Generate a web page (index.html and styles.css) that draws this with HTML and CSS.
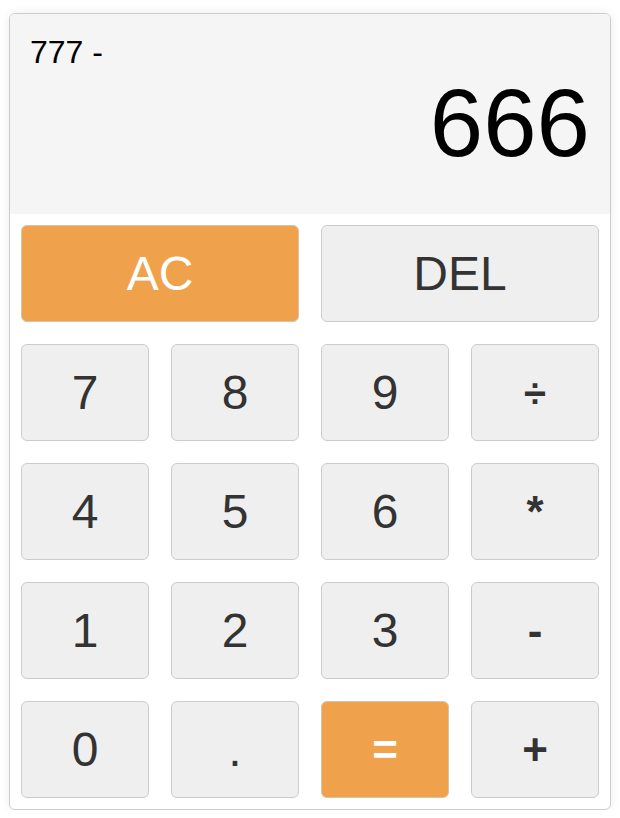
FILE: index.html
```html
<!DOCTYPE html>
<html>
<head>
<meta charset="utf-8">
<link rel="stylesheet" href="styles.css">
</head>
<body>
<div class="calc">
  <div class="display">
    <div class="prev">777 -</div>
    <div class="curr">666</div>
  </div>
  <div class="keys">
    <button class="key span2 accent">AC</button>
    <button class="key span2">DEL</button>
    <button class="key">7</button>
    <button class="key">8</button>
    <button class="key">9</button>
    <button class="key op div">÷</button>
    <button class="key">4</button>
    <button class="key">5</button>
    <button class="key">6</button>
    <button class="key op">*</button>
    <button class="key">1</button>
    <button class="key">2</button>
    <button class="key">3</button>
    <button class="key op">-</button>
    <button class="key">0</button>
    <button class="key">.</button>
    <button class="key accent op">=</button>
    <button class="key op">+</button>
  </div>
</div>
</body>
</html>
```
FILE: styles.css
```css
html, body {
  margin: 0;
  padding: 0;
  background: #ffffff;
}
body {
  padding: 13px 0 0 9px;
  font-family: "Liberation Sans", Arial, sans-serif;
}
.calc {
  width: 600px;
  border: 1px solid #cccccc;
  border-radius: 6px;
  background: #ffffff;
  box-shadow: 0 0 10px rgba(0, 0, 0, 0.08);
  overflow: hidden;
}
.display {
  height: 200px;
  box-sizing: border-box;
  background: #f5f5f5;
  padding: 20px 20px 0 20px;
}
.prev {
  font-size: 32px;
  line-height: 36px;
  color: #000000;
}
.curr {
  margin-top: 5px;
  font-size: 96px;
  line-height: 96px;
  text-align: right;
  color: #000000;
}
.keys {
  display: grid;
  grid-template-columns: repeat(4, 128px);
  grid-auto-rows: 97px;
  gap: 22px;
  padding: 11px;
}
.key {
  margin: 0;
  padding: 0;
  border: 1px solid #cccccc;
  border-radius: 6px;
  background: #efefef;
  color: #333333;
  font-family: "Liberation Sans", Arial, sans-serif;
  font-size: 48px;
  line-height: 1;
}
.op {
  font-weight: 700;
  font-size: 44px;
}
.div {
  font-size: 40px;
}
.span2 {
  grid-column: span 2;
}
.accent {
  background: #f0a14b;
  border-color: #d9c3a8;
  color: #ffffff;
}
```
